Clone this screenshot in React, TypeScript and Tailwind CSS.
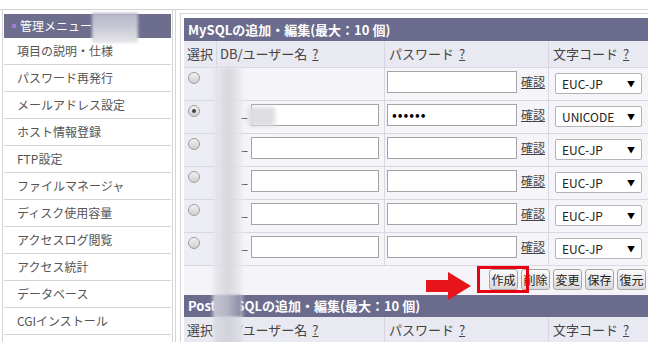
import React from 'react';

const font = { fontFamily: '"Noto Sans CJK JP", "Noto Sans", sans-serif' };

const menu = [
  '項目の説明・仕様',
  'パスワード再発行',
  'メールアドレス設定',
  'ホスト情報登録',
  'FTP設定',
  'ファイルマネージャ',
  'ディスク使用容量',
  'アクセスログ閲覧',
  'アクセス統計',
  'データベース',
  'CGIインストール',
];

const rows = [
  { checked: false, input: false, pass: '', code: 'EUC-JP' },
  { checked: true, input: true, pass: '••••••', code: 'UNICODE' },
  { checked: false, input: true, pass: '', code: 'EUC-JP' },
  { checked: false, input: true, pass: '', code: 'EUC-JP' },
  { checked: false, input: true, pass: '', code: 'EUC-JP' },
  { checked: false, input: true, pass: '', code: 'EUC-JP' },
];

function Radio({ checked }: { checked: boolean }) {
  return (
    <div className="flex h-[12px] w-[12px] items-center justify-center rounded-full border border-[#9e9e9e] bg-gradient-to-b from-[#f2f2f2] to-[#cfcfcf]">
      {checked && <div className="h-[4px] w-[4px] rounded-full bg-[#444]" />}
    </div>
  );
}

function Help() {
  return <span className="ml-[5px] underline">?</span>;
}

function Sidebar() {
  return (
    <div className="ml-[2px] w-[171px] shrink-0 border-x border-[#d4d4d4] px-[1px] pt-[4px]">
      <div className="flex h-[24px] items-center bg-[#6d6d8d] pl-[8px] text-[12px] text-white">
        <span className="mr-[4px] inline-block h-[4px] w-[4px] bg-[#9c7fd2]" />
        管理メニュー
      </div>
      {menu.map(m => (
        <div
          key={m}
          className="flex h-[27px] items-center border-b border-[#d4d4d4] pl-[13px] text-[12px] text-[#555]"
        >
          {m}
        </div>
      ))}
    </div>
  );
}

function ColHeader() {
  return (
    <div className="grid h-[26px] grid-cols-[32px_168px_164px_110px] bg-[#e9e9f2] text-[13px] leading-[26px] text-[#444]">
      <div className="pl-[3px]">選択</div>
      <div className="border-l border-[#d6d6e0] pl-[3px]">
        DB/ユーザー名
        <Help />
      </div>
      <div className="border-l border-[#d6d6e0] pl-[4px]">
        パスワード
        <Help />
      </div>
      <div className="border-l border-[#d6d6e0] pl-[4px]">
        文字コード
        <Help />
      </div>
    </div>
  );
}

function SectionTitle({ children, h }: { children: React.ReactNode; h: string }) {
  return (
    <div className={`flex items-center bg-[#6b6b8d] pl-[4px] text-[13px] font-bold text-white ${h}`}>
      {children}
    </div>
  );
}

function DataRow({ r }: { r: (typeof rows)[number] }) {
  return (
    <div className="grid h-[33px] grid-cols-[32px_168px_164px_110px] border-t border-[#d8d8e2] bg-[#f4f4f9]">
      <div className="bg-[#ededf5] pl-[4px] pt-[4px]">
        <Radio checked={r.checked} />
      </div>
      <div className="flex items-start border-l border-[#d8d8e2] pl-[24px] pt-[3px]">
        {r.input && (
          <>
            <span className="w-[10px] text-[12px] leading-[16px] text-[#333]">_</span>
            <div className="h-[22px] w-[128px] border border-[#a4a4a4] bg-white" />
          </>
        )}
      </div>
      <div className="flex items-start border-l border-[#d8d8e2] pl-[2px] pt-[3px]">
        <div className="h-[22px] w-[130px] border border-[#a4a4a4] bg-white pl-[4px] text-[14px] leading-[19px] tracking-[1px] text-black">
          {r.pass}
        </div>
        <span className="ml-[4px] text-[12px] leading-[22px] text-[#444] underline">確認</span>
      </div>
      <div className="border-l border-[#d8d8e2] pl-[6px] pt-[5px]">
        <div className="flex h-[21px] w-[87px] items-center justify-between rounded-[2px] border border-[#b4b4b4] bg-white pl-[6px] pr-[6px] text-[12px] text-[#222]">
          <span>{r.code}</span>
          <span className="text-[8px] text-black">▼</span>
        </div>
      </div>
    </div>
  );
}

function Buttons() {
  return (
    <div className="flex h-[30px] gap-[3px] border-t border-[#d8d8e2] bg-[#f4f4f9] pl-[305px] pt-[3px]">
      {['作成', '削除', '変更', '保存', '復元'].map(b => (
        <div
          key={b}
          className="flex h-[21px] w-[29px] items-center justify-center rounded-[3px] border border-[#a6a6a6] bg-gradient-to-b from-[#fafafa] to-[#dadada] text-[12px] text-[#222]"
        >
          {b}
        </div>
      ))}
    </div>
  );
}

export default function App() {
  return (
    <div className="relative h-[342px] w-[648px] overflow-hidden bg-white" style={font}>
      <div className="mt-[9px] flex border-t border-[#d4d4d4]">
        <Sidebar />
        <div className="ml-[2px] flex-1 border-l border-[#d4d4d4]">
          <div className="ml-[4px] mt-[3px] border-l border-t border-[#d4d4d4] pl-[3px] pt-[4px]">
            <div className="w-[474px]">
              <SectionTitle h="h-[23px]">MySQLの追加・編集(最大：10 個)</SectionTitle>
              <ColHeader />
              {rows.map((r, i) => (
                <DataRow key={i} r={r} />
              ))}
              <Buttons />
              <SectionTitle h="h-[22px]">PostgreSQLの追加・編集(最大：10 個)</SectionTitle>
              <ColHeader />
            </div>
          </div>
        </div>
      </div>

      {/* privacy blurs */}
      <div className="absolute left-[92px] top-[13px] h-[30px] w-[46px] bg-gradient-to-b from-[#b6b6c8] via-[#cacad6] to-[#e6e6ea] blur-[1.5px]" />
      <div className="absolute left-[213px] top-[67px] h-[280px] w-[29px] bg-gradient-to-r from-[#e8e8ee]/70 via-[#d6d6dc] to-[#e8e8ee]/70 blur-[2px]" />
      <div className="absolute left-[214px] top-[295px] h-[22px] w-[27px] bg-gradient-to-r from-[#c4c4d2] via-[#b4b4c6] to-[#8c8ca6] blur-[1px]" />
      <div className="absolute left-[214px] top-[317px] h-[26px] w-[28px] bg-gradient-to-r from-[#dcdce4] via-[#d2d2da] to-[#e0e0e8] blur-[1px]" />
      <div className="absolute left-[248px] top-[107px] h-[19px] w-[27px] bg-[#dedee2] blur-[2px]" />

      {/* annotation */}
      <div className="absolute left-[477px] top-[266px] h-[27px] w-[52px] border-[3px] border-[#e60012]" />
      <svg className="absolute left-[426px] top-[272px]" width="46" height="29" viewBox="0 0 46 29">
        <path d="M0 8 H22 V0 L45 14 L22 28 V20 H0 Z" fill="#e8141c" />
      </svg>
    </div>
  );
}
